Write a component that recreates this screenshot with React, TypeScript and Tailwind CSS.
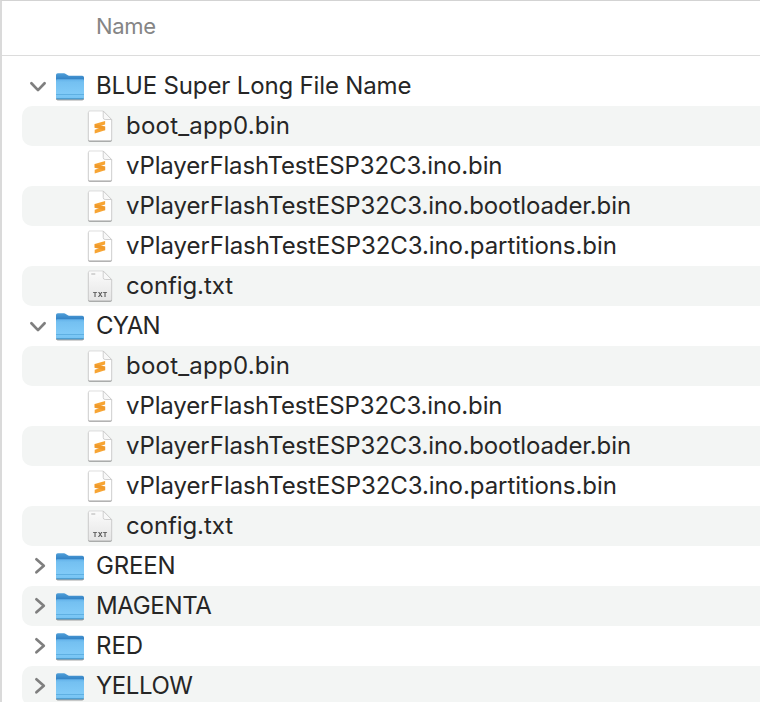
type Entry = { name: string; kind: 'open' | 'closed' | 'bin' | 'txt'; tracking: string };

const files: Entry[] = [
  { name: 'boot_app0.bin', kind: 'bin', tracking: 'tracking-[0.22px]' },
  { name: 'vPlayerFlashTestESP32C3.ino.bin', kind: 'bin', tracking: 'tracking-[-0.13px]' },
  { name: 'vPlayerFlashTestESP32C3.ino.bootloader.bin', kind: 'bin', tracking: 'tracking-[-0.09px]' },
  { name: 'vPlayerFlashTestESP32C3.ino.partitions.bin', kind: 'bin', tracking: 'tracking-[-0.07px]' },
  { name: 'config.txt', kind: 'txt', tracking: 'tracking-[-0.1px]' },
];

const entries: Entry[] = [
  { name: 'BLUE Super Long File Name', kind: 'open', tracking: 'tracking-[-0.15px]' },
  ...files,
  { name: 'CYAN', kind: 'open', tracking: 'tracking-[-0.7px]' },
  ...files,
  { name: 'GREEN', kind: 'closed', tracking: 'tracking-[-0.2px]' },
  { name: 'MAGENTA', kind: 'closed', tracking: 'tracking-[-0.33px]' },
  { name: 'RED', kind: 'closed', tracking: 'tracking-[0px]' },
  { name: 'YELLOW', kind: 'closed', tracking: 'tracking-[-0.45px]' },
];

function Chevron({ open }: { open: boolean }) {
  return (
    <svg className="h-10 w-8 shrink-0" viewBox="0 0 32 40" fill="none" stroke="#7f7f7f" strokeWidth="2.7" strokeLinecap="round" strokeLinejoin="round">
      <path d={open ? 'M9.4 17.3L16 24.1L22.6 17.3' : 'M14.4 13.3L21.8 19.8L14.4 26.3'} />
    </svg>
  );
}

function Folder() {
  return (
    <svg className="h-10 w-8 shrink-0 drop-shadow-[0_1px_0.6px_rgba(0,0,0,0.4)]" viewBox="0 0 32 40">
      <defs>
        <linearGradient id="front" x1="0" y1="0" x2="0" y2="1">
          <stop offset="0" stopColor="#64b3ea" />
          <stop offset="0.15" stopColor="#74c0f1" />
          <stop offset="0.7" stopColor="#80caf7" />
          <stop offset="1" stopColor="#74c2f2" />
        </linearGradient>
        <linearGradient id="back" x1="0" y1="0" x2="0" y2="1">
          <stop offset="0" stopColor="#4f9fd9" />
          <stop offset="0.24" stopColor="#3584c6" />
        </linearGradient>
      </defs>
      <path d="M2 31V8.9Q2 7.2 3.8 7.2H10q1 0 1.8.7l1.6 1.2q.7.6 1.8.6H28.2Q30 9.7 30 11.5V31Z" fill="url(#back)" />
      <path d="M2 14.4Q2 13.2 3.2 13.2H28.8Q30 13.2 30 14.4V31.6Q30 33.2 28.4 33.2H3.6Q2 33.2 2 31.6Z" fill="url(#front)" />
      <path d="M2 28.5H30" stroke="#5fb0e2" strokeWidth="1" />
      <path d="M2.2 32Q2.6 33.2 3.6 33.2H28.4Q29.4 33.2 29.8 32Z" fill="#4f9fd1" />
    </svg>
  );
}

function Page({ txt }: { txt: boolean }) {
  return (
    <svg className="h-10 w-8 shrink-0 drop-shadow-[0_1px_0.7px_rgba(0,0,0,0.35)]" viewBox="0 0 32 40">
      <defs>
        <linearGradient id="paper" x1="0" y1="0" x2="0" y2="1">
          <stop offset="0" stopColor="#fbfbfb" />
          <stop offset="1" stopColor="#e6e6e6" />
        </linearGradient>
      </defs>
      <path d="M5.5 5H19.2L27.6 13.5V33.2Q27.6 34.5 26.3 34.5H5.7Q4.4 34.5 4.4 33.2V6.3Q4.4 5 5.7 5Z" fill={txt ? 'url(#paper)' : '#ffffff'} stroke="#d0d0d0" strokeWidth="0.7" />
      <path d="M19.2 5V11.5Q19.2 13.5 21.2 13.5H27.6Z" fill="#f8f8f8" stroke="#c5c5c5" strokeWidth="0.8" />
      {txt ? (
        <>
          <path d="M7.3 8H11.3" stroke="#b0b0b0" strokeWidth="1" />
          <text x="16.3" y="31" textAnchor="middle" fontSize="6.8" fontWeight="700" fontFamily="Inter, sans-serif" letterSpacing="0.4" fill="#555">TXT</text>
        </>
      ) : (
        <>
          <path d="M10.7 18.1L21.1 14.9V18.6L10.7 21.8Z" fill="#f7a534" />
          <path d="M10.7 23.7L21.1 20.5V24.2L10.7 27.4Z" fill="#f7a534" />
          <path d="M10.7 18.1V21.8L21.1 24.2V20.5Z" fill="#f09a2b" />
        </>
      )}
    </svg>
  );
}

function Row({ entry, striped }: { entry: Entry; striped: boolean }) {
  const isFolder = entry.kind === 'open' || entry.kind === 'closed';
  return (
    <div className={`flex h-10 items-center rounded-l-[10px] ${striped ? 'bg-[#f3f5f4]' : 'bg-white'}`}>
      {isFolder ? (
        <>
          <Chevron open={entry.kind === 'open'} />
          <Folder />
        </>
      ) : (
        <div className="flex pl-[62px]">
          <Page txt={entry.kind === 'txt'} />
        </div>
      )}
      <span className={`whitespace-pre pl-[10px] text-2xl leading-10 ${entry.tracking}`}>{entry.name}</span>
    </div>
  );
}

export default function App() {
  return (
    <div className="h-[702px] w-[760px] overflow-hidden border-l-2 border-t border-l-[#dadada] border-t-[#d3d3d3] bg-white font-['Inter',sans-serif] text-[#262626]">
      <header className="flex h-[55px] items-center border-b border-[#dcdcdc] pb-[3px] pl-[94px] text-[22px] tracking-[-0.3px] text-[#858585]">
        <span>Name</span>
      </header>
      <main className="pl-5 pt-[10px]">
        {entries.map((entry, i) => (
          <Row key={i} entry={entry} striped={i % 2 === 1} />
        ))}
      </main>
    </div>
  );
}
